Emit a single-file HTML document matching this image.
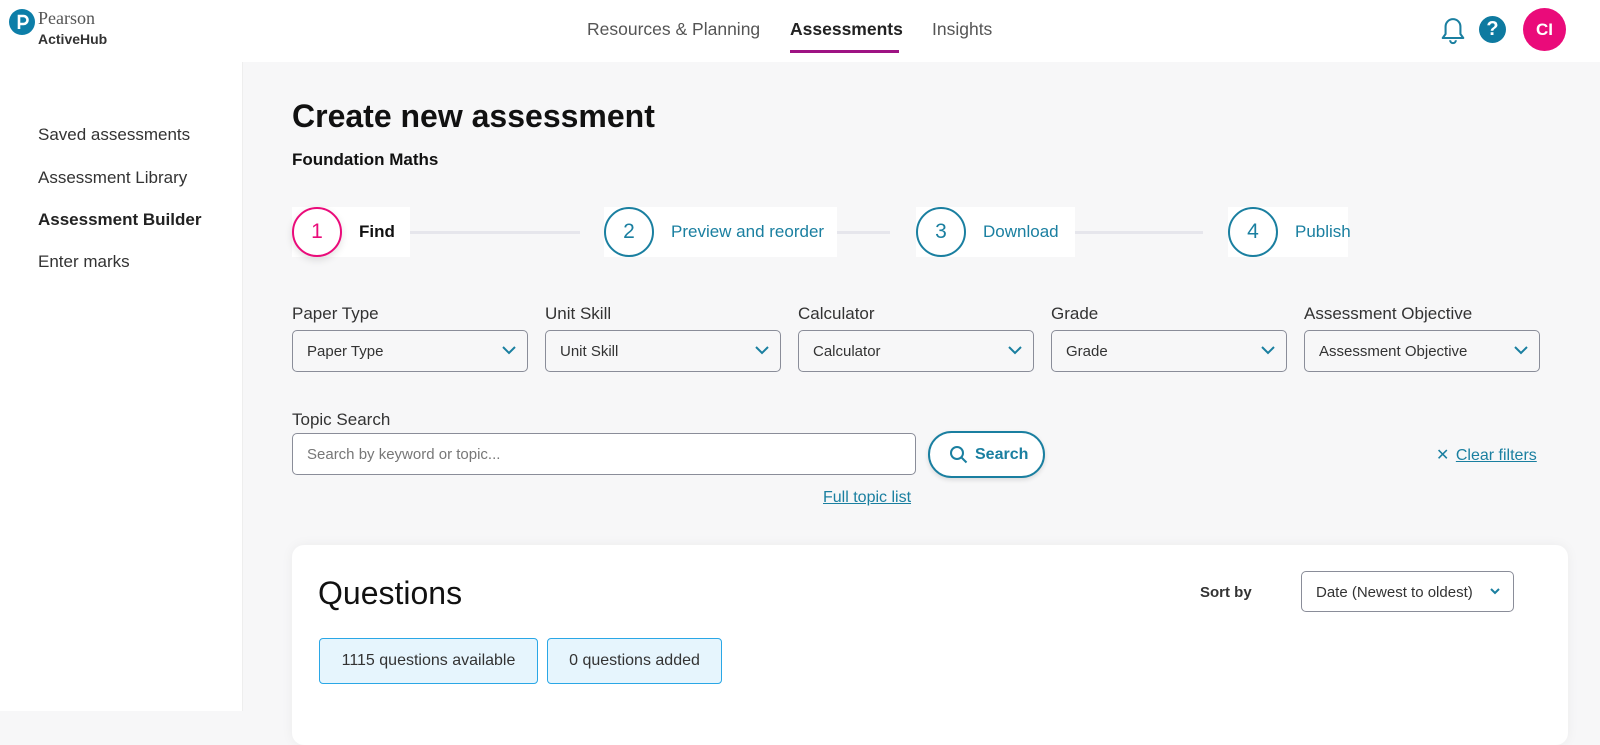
<!DOCTYPE html>
<html><head><meta charset="utf-8"><style>
*{box-sizing:border-box;margin:0;padding:0}
html{background:#f7f7f8}
body{width:1600px;height:711px;overflow:hidden;background:#f7f7f8;font-family:"Liberation Sans",sans-serif;color:#1f1f1f;position:relative}
.a{position:absolute}
.hdr{left:0;top:0;width:1600px;height:62px;background:#fff}
.side{left:0;top:62px;width:243px;height:649px;background:#fff;border-right:1px solid #eee}
.side div{position:absolute;left:38px;font-size:17px;color:#333}
.nav{font-size:17.5px;color:#555;top:19px}
.step{background:#fff;height:50px;top:207px}
.circ{position:absolute;left:0;top:0;width:50px;height:50px;border-radius:50%;border:2px solid #1a7fa0;color:#1a7fa0;font-size:21px;text-align:center;line-height:46px;background:#fff}
.sl{position:absolute;top:15px;font-size:17px;color:#1a7fa0}
.line{height:3px;background:#e6e6ec;top:231px}
.lab{font-size:17px;color:#333;top:304px}
.sel{top:330px;width:236px;height:42px;border:1.5px solid #8a8d99;border-radius:5px;font-size:15px;color:#333;padding:12px 14px}
.sel svg{position:absolute;right:10px;top:13px}
</style></head><body>
<div class="a hdr"></div>
<svg class="a" style="left:8px;top:8px" width="28" height="28" viewBox="0 0 28 28"><circle cx="14" cy="14" r="13" fill="#0d7ea8"/><path d="M11 21V8h4.5a4 4 0 0 1 0 8H11" stroke="#fff" stroke-width="2.6" fill="none"/></svg>
<div class="a" style="left:38px;top:8px;font-family:'Liberation Serif',serif;font-size:18px;color:#555">Pearson</div>
<div class="a" style="left:38px;top:31px;font-size:14px;font-weight:bold;color:#333">ActiveHub</div>
<div class="a nav" style="left:587px">Resources &amp; Planning</div>
<div class="a nav" style="left:790px;font-weight:bold;color:#222">Assessments</div>
<div class="a" style="left:790px;top:50px;width:109px;height:3px;background:#9e1383"></div>
<div class="a nav" style="left:932px">Insights</div>
<svg class="a" style="left:1437px;top:14px" width="32" height="32" viewBox="0 0 28 28"><path d="M5 21h18l-2.5-3.5v-6.5a6.5 6.5 0 0 0-13 0v6.5z M11.5 23a2.5 2.5 0 0 0 5 0" stroke="#1a7fa0" stroke-width="1.8" fill="none" stroke-linejoin="round"/></svg>
<div class="a" style="left:1479px;top:16px;width:27px;height:27px;border-radius:50%;background:#0e7aa0;color:#fff;font-weight:bold;font-size:20px;text-align:center;line-height:27px">?</div>
<div class="a" style="left:1523px;top:8px;width:43px;height:43px;border-radius:50%;background:#ea0b7a;color:#fff;font-weight:bold;font-size:17px;text-align:center;line-height:43px">CI</div>
<div class="a side">
<div style="top:63px">Saved assessments</div>
<div style="top:106px">Assessment Library</div>
<div style="top:148px;font-weight:bold;color:#222">Assessment Builder</div>
<div style="top:190px">Enter marks</div>
</div>
<div class="a" style="left:292px;top:98px;font-size:32px;font-weight:bold;color:#111">Create new assessment</div>
<div class="a" style="left:292px;top:150px;font-size:17px;font-weight:bold;color:#111">Foundation Maths</div>
<div class="a line" style="left:410px;width:170px"></div>
<div class="a line" style="left:837px;width:53px"></div>
<div class="a line" style="left:1075px;width:128px"></div>
<div class="a step" style="left:292px;width:118px"><div class="circ" style="border-color:#ea0b7a;color:#ea0b7a;box-shadow:0 3px 8px rgba(0,0,0,.12)">1</div><div class="sl" style="left:67px;color:#111;font-weight:bold">Find</div></div>
<div class="a step" style="left:604px;width:233px"><div class="circ">2</div><div class="sl" style="left:67px">Preview and reorder</div></div>
<div class="a step" style="left:916px;width:159px"><div class="circ">3</div><div class="sl" style="left:67px">Download</div></div>
<div class="a step" style="left:1228px;width:120px"><div class="circ">4</div><div class="sl" style="left:67px">Publish</div></div>
<div class="a lab" style="left:292px">Paper Type</div>
<div class="a lab" style="left:545px">Unit Skill</div>
<div class="a lab" style="left:798px">Calculator</div>
<div class="a lab" style="left:1051px">Grade</div>
<div class="a lab" style="left:1304px">Assessment Objective</div>
<div class="a sel" style="left:292px">Paper Type<svg width="16" height="12"><path d="M2 3l6 6 6-6" stroke="#1a7fa0" stroke-width="2" fill="none"/></svg></div>
<div class="a sel" style="left:545px">Unit Skill<svg width="16" height="12"><path d="M2 3l6 6 6-6" stroke="#1a7fa0" stroke-width="2" fill="none"/></svg></div>
<div class="a sel" style="left:798px">Calculator<svg width="16" height="12"><path d="M2 3l6 6 6-6" stroke="#1a7fa0" stroke-width="2" fill="none"/></svg></div>
<div class="a sel" style="left:1051px">Grade<svg width="16" height="12"><path d="M2 3l6 6 6-6" stroke="#1a7fa0" stroke-width="2" fill="none"/></svg></div>
<div class="a sel" style="left:1304px">Assessment Objective<svg width="16" height="12"><path d="M2 3l6 6 6-6" stroke="#1a7fa0" stroke-width="2" fill="none"/></svg></div>
<div class="a lab" style="left:292px;top:410px">Topic Search</div>
<div class="a" style="left:292px;top:433px;width:624px;height:42px;border:1.5px solid #8a8d99;border-radius:5px;background:#fff;font-size:15px;color:#777;padding:12px 14px">Search by keyword or topic...</div>
<div class="a" style="left:928px;top:431px;width:117px;height:47px;border:2px solid #1a7fa0;border-radius:24px;background:#fff;box-shadow:0 2px 5px rgba(0,0,0,.12);color:#1a7fa0;font-weight:bold;font-size:16px;padding:13px 0 0 45px">Search<svg class="a" style="left:19px;top:12px" width="20" height="20"><circle cx="8" cy="8" r="6" stroke="#1a7fa0" stroke-width="2" fill="none"/><path d="M12.5 12.5l5 5" stroke="#1a7fa0" stroke-width="2"/></svg></div>
<div class="a" style="left:823px;top:489px;font-size:16px;color:#1a7fa0;text-decoration:underline">Full topic list</div>
<div class="a" style="left:1436px;top:445px;font-size:16px;color:#1a7fa0">✕ <span style="text-decoration:underline;margin-left:2px">Clear filters</span></div>
<div class="a" style="left:292px;top:545px;width:1276px;height:200px;background:#fff;border-radius:12px;box-shadow:0 0 12px rgba(0,0,0,.05)"></div>
<div class="a" style="left:318px;top:575px;font-size:32px;color:#111">Questions</div>
<div class="a" style="left:1200px;top:584px;font-size:15px;font-weight:bold;color:#333">Sort by</div>
<div class="a sel" style="left:1301px;top:571px;width:213px;height:41px;font-size:15px">Date (Newest to oldest)<svg width="16" height="12" style="top:13px"><path d="M4 4l4 4 4-4" stroke="#1a7fa0" stroke-width="2" fill="none"/></svg></div>
<div class="a" style="left:319px;top:638px;width:219px;height:46px;background:#e6f5fd;border:1.5px solid #2aa7e6;border-radius:4px;font-size:16px;color:#333;text-align:center;line-height:43px">1115 questions available</div>
<div class="a" style="left:547px;top:638px;width:175px;height:46px;background:#e6f5fd;border:1.5px solid #2aa7e6;border-radius:4px;font-size:16px;color:#333;text-align:center;line-height:43px">0 questions added</div>
</body></html>
